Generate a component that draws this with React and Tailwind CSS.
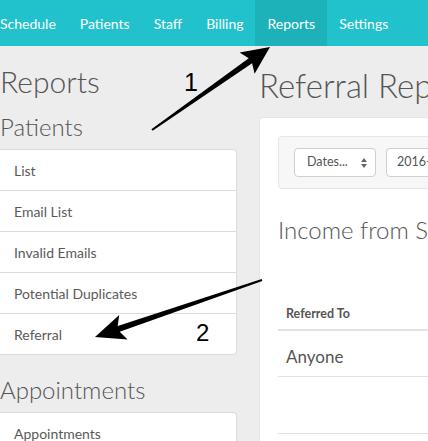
import React from "react";

const navItems = ["Schedule", "Patients", "Staff", "Billing", "Reports", "Settings"];
const patientItems = ["List", "Email List", "Invalid Emails", "Potential Duplicates", "Referral"];

export default function App() {
  return (
    <div
      className="relative w-[428px] h-[441px] overflow-hidden bg-[#ededed]"
      style={{ fontFamily: "Lato, 'Open Sans', sans-serif" }}
    >
      <nav className="flex h-[46px] bg-[#21c2cb] ml-[-12px]">
        {navItems.map((n) => (
          <div
            key={n}
            className={`flex items-center px-[12px] text-[14px] text-white ${
              n === "Reports" ? "bg-[#1db1ba]" : ""
            }`}
          >
            {n}
          </div>
        ))}
      </nav>

      <div className="flex gap-[22px]">
        <aside className="w-[237px] shrink-0 text-[#555]">
          <h1 className="text-[30px] font-light leading-none mt-[20px]">Reports</h1>
          <h2 className="text-[24px] font-light leading-none mt-[19px]">Patients</h2>
          <ul className="mt-[10px] bg-white border border-[#dcdcdc] border-l-0 rounded-r-[4px]">
            {patientItems.map((p, i) => (
              <li
                key={p}
                className={`flex items-center pl-[14px] text-[14px] text-[#5a5a5a] ${
                  i > 0 ? "h-[41px] border-t border-[#dcdcdc]" : "h-[40px]"
                }`}
              >
                {p}
              </li>
            ))}
          </ul>
          <h2 className="text-[24px] font-light leading-none mt-[23px]">Appointments</h2>
          <ul className="mt-[10px] bg-white border border-[#dcdcdc] border-l-0 rounded-r-[4px]">
            <li className="h-[40px] flex items-center pl-[14px] text-[14px] text-[#5a5a5a]">Appointments</li>
          </ul>
        </aside>

        <main className="w-[500px] shrink-0 text-[#555]">
          <h1 className="text-[33px] font-light leading-none mt-[23px] whitespace-nowrap">Referral Report</h1>
          <section className="mt-[15px] bg-white rounded-[4px] border border-[#e4e4e4] px-[18px] pt-[18px] h-[400px]">
            <div className="flex items-center gap-[10px] h-[53px] px-[15px] bg-[#f7f7f7] border border-[#e6e6e6] rounded-[4px]">
              <div className="flex items-center justify-between w-[82px] h-[29px] pl-[12px] pr-[8px] bg-white border border-[#cfcfcf] rounded-[4px] text-[12.5px] text-[#555]">
                <span>Dates...</span>
                <svg width="6" height="10" viewBox="0 0 6 10">
                  <path d="M3 0 L6 4 L0 4 Z M0 6 L6 6 L3 10 Z" fill="#666" />
                </svg>
              </div>
              <div className="flex items-center w-[120px] h-[29px] pl-[10px] bg-white border border-[#cfcfcf] rounded-[4px] text-[12.5px] text-[#555]">
                2016-01-01
              </div>
            </div>
            <h2 className="text-[24px] font-light leading-none mt-[29px] whitespace-nowrap">Income from Sources</h2>
            <div className="mt-[59px]">
              <div className="h-[30px] flex items-center pl-[8px] pb-[2px] text-[12.5px] font-bold text-[#555] border-b-2 border-[#e2e2e2]">
                Referred To
              </div>
              <div className="h-[46px] flex items-center pl-[8px] pt-[6px] text-[17px] text-[#555] border-b border-[#e2e2e2]">
                Anyone
              </div>
              <div className="h-[57px] border-b border-[#e2e2e2]"></div>
            </div>
          </section>
        </main>
      </div>

      <svg className="absolute left-0 top-0 pointer-events-none" width="428" height="441">
        <polygon
          points="152.6,130.8 252.1,63.3 254.6,73.7 270,47 239.6,52.5 248.7,58.3 151.4,129.2"
          fill="#000"
        />
        <polygon
          points="262.3,280.9 119.7,331.7 127.6,339.6 95,337 119.2,315 117.7,326.1 261.7,279.1"
          fill="#000"
        />
        <text x="184" y="91" fontSize="25" fontFamily="'Liberation Sans', Arial, sans-serif" fill="#000">1</text>
        <text x="196" y="341" fontSize="24" fontFamily="'Liberation Sans', Arial, sans-serif" fill="#000">2</text>
      </svg>
    </div>
  );
}
